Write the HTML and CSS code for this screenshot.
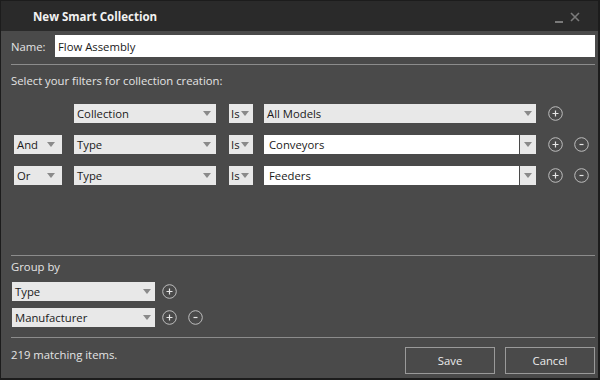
FILE: index.html
```html
<!DOCTYPE html>
<html lang="en">
<head>
    <meta charset="UTF-8">
    <title>New Smart Collection</title>
    <link rel="stylesheet" href="styles.css">
</head>
<body>
    <div class="window">
        <div class="titlebar">
            <span class="title">New Smart Collection</span>
            <div class="win-controls">
                <span class="win-min"></span>
                <svg class="win-close" width="10" height="10" viewBox="0 0 10 10">
                    <path d="M1 1 L9 9 M9 1 L1 9" stroke="#7a7a7a" stroke-width="1.6" fill="none"/>
                </svg>
            </div>
        </div>

        <div class="content">
            <div class="name-row">
                <label class="name-label" for="name">Name:</label>
                <input class="name-input" id="name" type="text" value="Flow Assembly">
            </div>

            <div class="separator sep-top"></div>

            <p class="section-text">Select your filters for collection creation:</p>

            <div class="filters">
                <div class="filter-row">
                    <div class="join-spacer"></div>
                    <div class="dropdown field"><span>Collection</span><i class="arrow"></i></div>
                    <div class="dropdown op"><span>Is</span><i class="arrow"></i></div>
                    <div class="dropdown value"><span>All Models</span><i class="arrow"></i></div>
                    <button class="circle-btn">
                        <svg width="15" height="15" viewBox="0 0 15 15"><circle cx="7.5" cy="7.5" r="6.8" fill="none" stroke="#bdbdbd" stroke-width="1"/><path d="M7.5 4.5 V10.5 M4.5 7.5 H10.5" stroke="#e6e6e6" stroke-width="1.2"/></svg>
                    </button>
                </div>

                <div class="filter-row">
                    <div class="dropdown join"><span>And</span><i class="arrow"></i></div>
                    <div class="dropdown field"><span>Type</span><i class="arrow"></i></div>
                    <div class="dropdown op"><span>Is</span><i class="arrow"></i></div>
                    <div class="combo">
                        <input class="combo-input" type="text" value="Conveyors">
                        <div class="combo-btn"><i class="arrow"></i></div>
                    </div>
                    <button class="circle-btn">
                        <svg width="15" height="15" viewBox="0 0 15 15"><circle cx="7.5" cy="7.5" r="6.8" fill="none" stroke="#bdbdbd" stroke-width="1"/><path d="M7.5 4.5 V10.5 M4.5 7.5 H10.5" stroke="#e6e6e6" stroke-width="1.2"/></svg>
                    </button>
                    <button class="circle-btn minus">
                        <svg width="15" height="15" viewBox="0 0 15 15"><circle cx="7.5" cy="7.5" r="6.8" fill="none" stroke="#bdbdbd" stroke-width="1"/><path d="M5.5 7.5 H9.5" stroke="#e6e6e6" stroke-width="1.2"/></svg>
                    </button>
                </div>

                <div class="filter-row">
                    <div class="dropdown join"><span>Or</span><i class="arrow"></i></div>
                    <div class="dropdown field"><span>Type</span><i class="arrow"></i></div>
                    <div class="dropdown op"><span>Is</span><i class="arrow"></i></div>
                    <div class="combo">
                        <input class="combo-input" type="text" value="Feeders">
                        <div class="combo-btn"><i class="arrow"></i></div>
                    </div>
                    <button class="circle-btn">
                        <svg width="15" height="15" viewBox="0 0 15 15"><circle cx="7.5" cy="7.5" r="6.8" fill="none" stroke="#bdbdbd" stroke-width="1"/><path d="M7.5 4.5 V10.5 M4.5 7.5 H10.5" stroke="#e6e6e6" stroke-width="1.2"/></svg>
                    </button>
                    <button class="circle-btn minus">
                        <svg width="15" height="15" viewBox="0 0 15 15"><circle cx="7.5" cy="7.5" r="6.8" fill="none" stroke="#bdbdbd" stroke-width="1"/><path d="M5.5 7.5 H9.5" stroke="#e6e6e6" stroke-width="1.2"/></svg>
                    </button>
                </div>
            </div>

            <div class="separator sep-group"></div>

            <p class="section-text group-title">Group by</p>

            <div class="group-row">
                <div class="dropdown group-field"><span>Type</span><i class="arrow"></i></div>
                <button class="circle-btn">
                    <svg width="15" height="15" viewBox="0 0 15 15"><circle cx="7.5" cy="7.5" r="6.8" fill="none" stroke="#bdbdbd" stroke-width="1"/><path d="M7.5 4.5 V10.5 M4.5 7.5 H10.5" stroke="#e6e6e6" stroke-width="1.2"/></svg>
                </button>
            </div>
            <div class="group-row">
                <div class="dropdown group-field"><span>Manufacturer</span><i class="arrow"></i></div>
                <button class="circle-btn">
                    <svg width="15" height="15" viewBox="0 0 15 15"><circle cx="7.5" cy="7.5" r="6.8" fill="none" stroke="#bdbdbd" stroke-width="1"/><path d="M7.5 4.5 V10.5 M4.5 7.5 H10.5" stroke="#e6e6e6" stroke-width="1.2"/></svg>
                </button>
                <button class="circle-btn minus">
                    <svg width="15" height="15" viewBox="0 0 15 15"><circle cx="7.5" cy="7.5" r="6.8" fill="none" stroke="#bdbdbd" stroke-width="1"/><path d="M5.5 7.5 H9.5" stroke="#e6e6e6" stroke-width="1.2"/></svg>
                </button>
            </div>

            <div class="separator sep-bottom"></div>

            <div class="footer">
                <span class="match-count">219 matching items.</span>
                <div class="actions">
                    <button class="action-btn">Save</button>
                    <button class="action-btn">Cancel</button>
                </div>
            </div>
        </div>
    </div>
</body>
</html>
```

FILE: styles.css
```css
* {
    margin: 0;
    padding: 0;
    box-sizing: border-box;
}

body {
    background: #1e1e1e;
    font-family: 'Open Sans', 'Noto Sans', sans-serif;
    font-size: 11.3px;
}

.window {
    width: 600px;
    height: 380px;
    border: 1px solid #1c1c1c;
    border-right-width: 2px;
    border-bottom-width: 2px;
    display: flex;
    flex-direction: column;
    background: #4a4a4a;
}

/* Title bar */
.titlebar {
    flex-shrink: 0;
    height: 30px;
    background: #2a2a2a;
    display: flex;
    align-items: center;
    justify-content: space-between;
    padding: 0 18px 0 32px;
}

.title {
    color: #f2f2f2;
    font-weight: bold;
    font-size: 11.5px;
}

.win-controls {
    display: flex;
    align-items: flex-end;
    gap: 7px;
    height: 10px;
    margin-top: 2px;
}

.win-min {
    width: 8px;
    height: 2px;
    background: #7a7a7a;
    margin-bottom: -1px;
}

/* Content */
.content {
    flex: 1;
    padding: 0 3px 0 10px;
    color: #e4e4e4;
}

.name-row {
    display: flex;
    align-items: center;
    margin-top: 4px;
    height: 22px;
}

.name-label {
    width: 44px;
}

.name-input {
    flex: 1;
    height: 22px;
    border: none;
    background: #fff;
    padding: 0 3px;
    font-family: inherit;
    font-size: 11.3px;
    color: #1a1a1a;
    outline: none;
}

.separator {
    height: 1px;
    background: #8c8c8c;
}

.sep-top {
    margin-top: 7px;
}

.section-text {
    line-height: 16px;
    margin-top: 8px;
}

/* Filter rows */
.filters {
    margin-top: 15px;
    padding-left: 3px;
    display: flex;
    flex-direction: column;
    gap: 12px;
}

.filter-row {
    display: flex;
    align-items: center;
    height: 19px;
}

.dropdown {
    height: 19px;
    background: #e8e8e8;
    color: #1a1a1a;
    display: flex;
    align-items: center;
    justify-content: space-between;
    padding: 0 5px 0 3px;
}

.arrow {
    width: 0;
    height: 0;
    border-left: 4px solid transparent;
    border-right: 4px solid transparent;
    border-top: 5px solid #8a8a8a;
}

.join-spacer,
.join {
    width: 48px;
    margin-right: 12px;
    padding-right: 7px;
}

.field {
    width: 142px;
    margin-right: 13px;
}

.op {
    width: 24px;
    margin-right: 11px;
    padding: 0 3px 0 2px;
    justify-content: flex-start;
    gap: 1px;
}

.value {
    width: 272px;
    margin-right: 12px;
    padding-right: 4px;
}

.combo {
    width: 272px;
    height: 19px;
    margin-right: 12px;
    display: flex;
    gap: 1px;
}

.combo-input {
    flex: 1;
    min-width: 0;
    height: 19px;
    border: none;
    background: #fff;
    padding: 0 5px;
    font-family: inherit;
    font-size: 11.3px;
    color: #1a1a1a;
    outline: none;
}

.combo-btn {
    width: 16px;
    background: #e8e8e8;
    display: flex;
    align-items: center;
    justify-content: center;
}

.circle-btn {
    width: 15px;
    height: 15px;
    border: none;
    background: none;
    display: flex;
}

.circle-btn.minus {
    margin-left: 11px;
}

/* Group by */
.sep-group {
    margin-top: 70px;
}

.group-title {
    margin-top: 3px;
}

.group-row {
    display: flex;
    align-items: center;
    height: 19px;
    margin-top: 7px;
    padding-left: 1px;
}

.group-field {
    width: 143px;
    margin-right: 7px;
    padding-right: 4px;
}

.sep-bottom {
    margin-top: 10px;
}

/* Footer */
.footer {
    display: flex;
    align-items: flex-start;
    justify-content: space-between;
    margin-top: 9px;
}

.match-count {
    line-height: 16px;
}

.actions {
    display: flex;
    gap: 10px;
}

.action-btn {
    width: 90px;
    height: 27px;
    border: 1px solid #9a9a9a;
    background: #4a4a4a;
    color: #ececec;
    font-family: inherit;
    font-size: 11.3px;
}
```
